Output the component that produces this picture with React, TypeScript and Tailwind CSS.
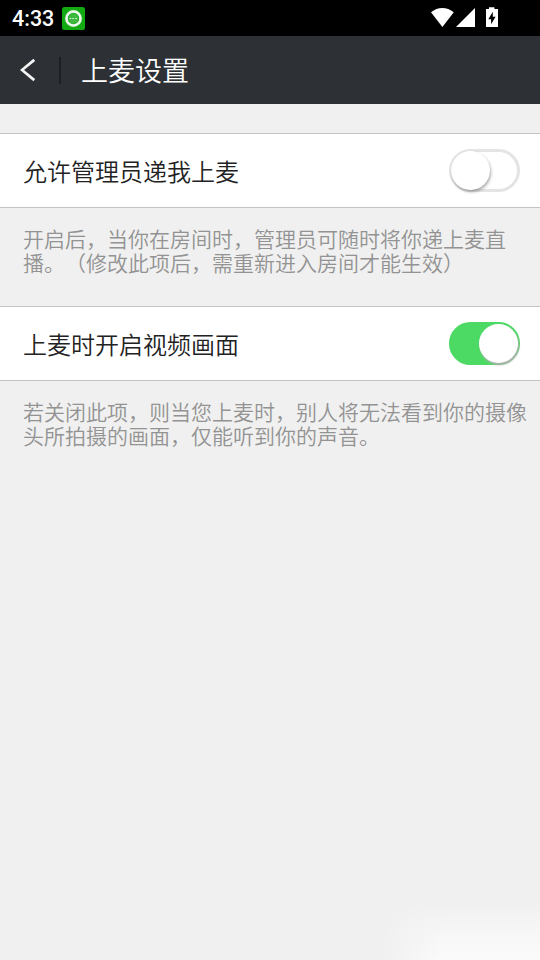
import { useState } from "react";

interface ToggleProps {
  label: string;
  checked: boolean;
  onChange: (checked: boolean) => void;
}

function Toggle({ label, checked, onChange }: ToggleProps) {
  return (
    <button
      role="switch"
      aria-checked={checked}
      aria-label={label}
      onClick={() => onChange(!checked)}
      className={`flex h-[43px] w-[71px] shrink-0 items-center rounded-full ${
        checked
          ? "justify-end border-2 border-[#4cd964] bg-[#4cd964]"
          : "justify-start border-[3px] border-[#e4e4e4] bg-white"
      }`}
    >
      <span
        className={`size-[39px] shrink-0 rounded-full bg-white ${
          checked ? "shadow-[1px_2px_2px_#b0b0b0]" : "-ml-px shadow-[1px_2px_3px_rgba(0,0,0,0.32)]"
        }`}
      />
    </button>
  );
}

interface SettingProps {
  title: string;
  hint: string;
  defaultChecked: boolean;
}

function Setting({ title, hint, defaultChecked }: SettingProps) {
  const [checked, setChecked] = useState(defaultChecked);

  return (
    <section>
      <div className="flex h-[75px] items-center justify-between border-y border-[#c4c4c4] bg-white pr-5 pl-[23px]">
        <span className="text-2xl font-[350] text-[#222]">{title}</span>
        <Toggle label={title} checked={checked} onChange={setChecked} />
      </div>
      <p className="h-[98px] pt-[18px] pl-[23px] text-[21px] leading-6 font-[350] text-[#939393] [text-spacing-trim:space-all]">
        {hint}
      </p>
    </section>
  );
}

function StatusBar() {
  return (
    <div className="flex h-9 items-center justify-between bg-black pr-[41px] pl-3 text-white">
      <div className="flex items-center gap-2">
        <span className="pt-0.5 font-[Roboto] text-[21.5px] leading-none font-medium">4:33</span>
        {/* App notification badge */}
        <svg className="h-[23px] w-[23px]" viewBox="0 0 23 23">
          <rect width="23" height="23" rx="2.5" fill="#12a913" />
          <circle cx="11.5" cy="11.5" r="7" fill="#12a913" stroke="#eefaee" strokeWidth="2.6" />
          <circle cx="11.5" cy="11.5" r="8.3" fill="none" stroke="#fff" strokeOpacity="0.5" strokeWidth="0.5" />
          <circle cx="11.5" cy="11.5" r="5.2" fill="#3fb840" />
          <path d="M7.5 11.5h8" stroke="#d4f3d4" strokeWidth="1.2" strokeDasharray="1.8 1" />
        </svg>
      </div>
      <svg className="h-[22px] w-[68px]" viewBox="0 0 68 22">
        {/* Wifi */}
        <path d="M0 5.2C6.7-.5 15.8-.5 22.8 5.2L11.4 20z" fill="#fff" />
        {/* Signal */}
        <path d="M25 20 44 1v19z" fill="#fff" />
        {/* Battery */}
        <path d="M58 .2h5.4V2H67v18H55V2h3z" fill="#fff" />
        <path d="m61.8 4.8-4.5 7.4h2.8v5l4.5-7.4h-2.8z" fill="#000" />
      </svg>
    </div>
  );
}

function Header() {
  return (
    <header className="flex h-[68px] items-center bg-[#2d3034] text-white">
      <button aria-label="返回" className="pl-5">
        <svg className="h-6 w-4" viewBox="0 0 16 24" fill="none" stroke="#f4f4f4" strokeWidth="2.7">
          <path d="M14.3 1.9 2 12l12.3 10.1" />
        </svg>
      </button>
      <div className="ml-[23px] h-[27px] w-0.5 bg-[#1d1f21]" />
      <h1 className="ml-5 pb-0.5 text-[27px] leading-none font-[350]">上麦设置</h1>
    </header>
  );
}

export default function App() {
  return (
    <div className="relative flex h-[960px] w-[540px] flex-col overflow-hidden bg-[#f0f0f0] font-['Noto_Sans_CJK_SC',sans-serif]">
      <StatusBar />
      <Header />
      <main className="pt-[29px]">
        <Setting
          title="允许管理员递我上麦"
          hint="开启后，当你在房间时，管理员可随时将你递上麦直播。（修改此项后，需重新进入房间才能生效）"
          defaultChecked={false}
        />
        <Setting
          title="上麦时开启视频画面"
          hint="若关闭此项，则当您上麦时，别人将无法看到你的摄像头所拍摄的画面，仅能听到你的声音。"
          defaultChecked
        />
      </main>
      {/* Soft highlight in the corner */}
      <div className="pointer-events-none absolute right-0 bottom-0 h-[54px] w-[162px] bg-linear-to-b from-white/10 via-white/45 to-white/70 [mask-image:linear-gradient(to_right,transparent,black_40%)]" />
    </div>
  );
}
